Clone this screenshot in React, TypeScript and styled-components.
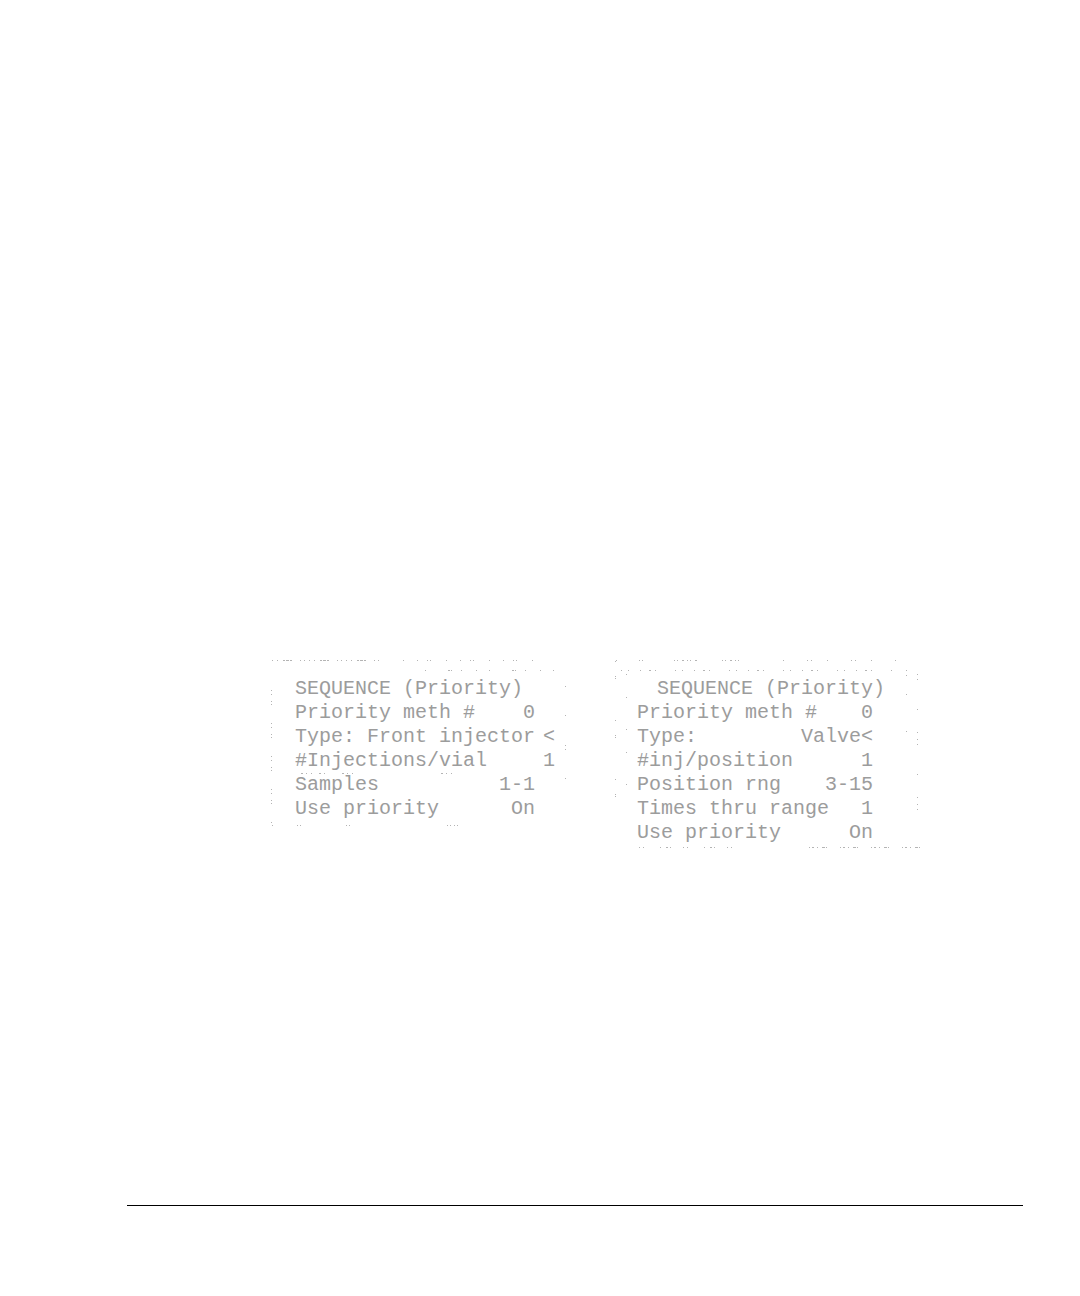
import React from "react";
import styled, { createGlobalStyle } from "styled-components";

const GlobalStyle = createGlobalStyle`
  body {
    margin: 0;
    background: #ffffff;
  }
`;

const Page = styled.div`
  box-sizing: border-box;
  min-height: 100vh;
  display: flex;
  flex-direction: column;
  padding: 660px 57px 90px 127px;
`;

const Displays = styled.main`
  display: flex;
  align-items: flex-start;
  gap: 46px;
  padding-left: 144px;
`;

const Panel = styled.section`
  position: relative;
  padding: 17px 0 4px 24px;
  color: #9c9c9c;
  font: 20px/24px "Liberation Mono", monospace;
`;

const Frame = styled.svg`
  position: absolute;
  inset: 0;
  width: 100%;
  height: 100%;
  overflow: visible;
  fill: none;
  stroke: #b4b4b4;
  stroke-width: 1;
  shape-rendering: crispEdges;
`;

const Title = styled.h2<{ $indent?: boolean }>`
  margin: 0;
  padding-left: ${(p) => (p.$indent ? 20 : 0)}px;
  font: inherit;
  white-space: pre;
`;

const Settings = styled.dl<{ $edge: number }>`
  margin: 0;
  padding-right: ${(p) => p.$edge}px;
`;

const Row = styled.div<{ $inset?: boolean }>`
  display: flex;
  justify-content: space-between;
  padding-right: ${(p) => (p.$inset ? 20 : 0)}px;
  white-space: pre;
`;

const Label = styled.dt`
  margin: 0;
`;

const Value = styled.dd`
  margin: 0;
`;

const Screen = styled.div<{ $width: number }>`
  width: ${(p) => p.$width}px;
`;

const FooterRule = styled.hr`
  width: 100%;
  height: 1px;
  margin: auto 0 0;
  border: 0;
  background: #000000;
`;

type Setting = { label: string; value: string; inset?: boolean };

type Speckle = { d: string; dash: string };

const frontSettings: Setting[] = [
  { label: "Priority meth #", value: "0", inset: true },
  { label: "Type: Front injector", value: "<" },
  { label: "#Injections/vial", value: "1" },
  { label: "Samples", value: "1-1", inset: true },
  { label: "Use priority", value: "On", inset: true },
];

const valveSettings: Setting[] = [
  { label: "Priority meth #", value: "0" },
  { label: "Type:", value: "Valve<" },
  { label: "#inj/position", value: "1" },
  { label: "Position rng", value: "3-15" },
  { label: "Times thru range", value: "1" },
  { label: "Use priority", value: "On" },
];

const frontFrame: Speckle[] = [
  { d: "M1 .5H108", dash: "1 4 1 5 2 1 3 1 2 8 1 3 1 4" },
  { d: "M132 .5H262", dash: "1 13 1 9 1 2 1 15" },
  { d: "M154 10.5H290", dash: "1 22 2 1 1 9 1 14 1 12" },
  { d: "M.5 30V166", dash: "1 3 1 6 1 2 1 18" },
  { d: "M294.5 26V140", dash: "1 28 1 29 1 3" },
  { d: "M30 113.5H86M170 113.5H186", dash: "2 3 1 4 1 7 2 3 1 17" },
  { d: "M1 165.5H4M26 165.5H32M75 165.5H81M176 165.5H187", dash: "1 2 1 3" },
];

const valveFrame: Speckle[] = [
  { d: "M3 .5H6M26 .5H30M61 .5H84M109 .5H130", dash: "1 2 1 4 2 3" },
  { d: "M170 .5H286", dash: "1 23 1 3 1 15" },
  { d: "M8 10.5H284", dash: "1 6 1 11 1 8 2 4 1 19" },
  { d: "M2.5 1V162", dash: "1 14 1 1 1 41" },
  { d: "M13.5 14V140", dash: "1 22 1 31" },
  { d: "M293.5 10V73", dash: "1 4 1 18 1 36" },
  { d: "M304.5 14V150", dash: "1 4 1 29 1 22 1 6" },
  { d: "M26 187.5H124", dash: "1 3 1 16 1 5 2 2 1 12" },
  { d: "M196 187.5H307", dash: "1 2 2 3 1 4 3 1 1 13" },
];

function SpeckledFrame({ marks }: { marks: Speckle[] }) {
  return (
    <Frame aria-hidden="true">
      {marks.map((mark) => (
        <path key={mark.d} d={mark.d} strokeDasharray={mark.dash} />
      ))}
    </Frame>
  );
}

function SettingsList({ items, edge }: { items: Setting[]; edge: number }) {
  return (
    <Settings $edge={edge}>
      {items.map((item) => (
        <Row key={item.label} $inset={item.inset}>
          <Label>{item.label}</Label>
          <Value>{item.value}</Value>
        </Row>
      ))}
    </Settings>
  );
}

export default function App() {
  return (
    <Page>
      <GlobalStyle />
      <Displays>
        <Panel>
          <SpeckledFrame marks={frontFrame} />
          <Screen $width={272}>
            <Title>SEQUENCE (Priority)</Title>
            <SettingsList items={frontSettings} edge={12} />
          </Screen>
        </Panel>
        <Panel>
          <SpeckledFrame marks={valveFrame} />
          <Screen $width={284}>
            <Title $indent>SEQUENCE (Priority)</Title>
            <SettingsList items={valveSettings} edge={48} />
          </Screen>
        </Panel>
      </Displays>
      <FooterRule />
    </Page>
  );
}
